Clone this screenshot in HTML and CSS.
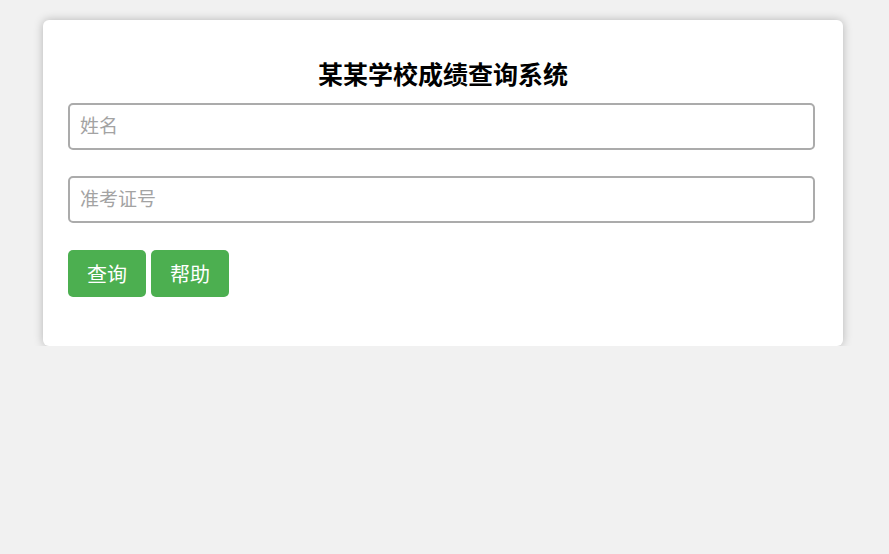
FILE: index.html
```html
<!DOCTYPE html>
<html lang="zh-CN">
<head>
<meta charset="utf-8">
<title>某某学校成绩查询系统</title>
<link rel="stylesheet" href="styles.css">
</head>
<body>
<div class="card">
  <h2 class="title">某某学校成绩查询系统</h2>
  <form class="form">
    <input class="field" type="text" placeholder="姓名">
    <input class="field" type="text" placeholder="准考证号">
    <div class="actions">
      <button class="btn" type="button">查询</button>
      <button class="btn" type="button">帮助</button>
    </div>
  </form>
</div>
</body>
</html>
```
FILE: styles.css
```css
html, body {
  margin: 0;
  padding: 0;
  background: #f1f1f1;
  font-family: "Liberation Sans", "Noto Sans CJK SC", sans-serif;
}
body {
  padding-top: 20px;
}
.card {
  width: 800px;
  box-sizing: border-box;
  margin: 0 0 0 43px;
  background: #fff;
  border-radius: 6px;
  box-shadow: 0 0 10px rgba(0, 0, 0, 0.25);
  padding: 40px 25px 49px 25px;
}
.title {
  margin: 0 0 13px 0;
  text-align: center;
  font-size: 25px;
  line-height: 30px;
  font-weight: bold;
  color: #000;
}
.form {
  display: flex;
  flex-direction: column;
  gap: 26px;
  margin: 0;
}
.field {
  width: 747px;
  height: 47px;
  box-sizing: border-box;
  border: 2px solid #ababab;
  border-radius: 5px;
  padding: 0 10px;
  font-family: "Liberation Sans", "Noto Sans CJK SC", sans-serif;
  font-size: 19px;
  color: #333;
  outline: none;
}
.field::placeholder {
  color: #a3a3a3;
}
.actions {
  display: flex;
  gap: 5px;
  margin-top: 1px;
}
.btn {
  width: 78px;
  height: 47px;
  border: none;
  border-radius: 5px;
  background: #4caf50;
  color: #fff;
  font-family: "Liberation Sans", "Noto Sans CJK SC", sans-serif;
  font-size: 20px;
  padding: 0;
  cursor: pointer;
}
```
